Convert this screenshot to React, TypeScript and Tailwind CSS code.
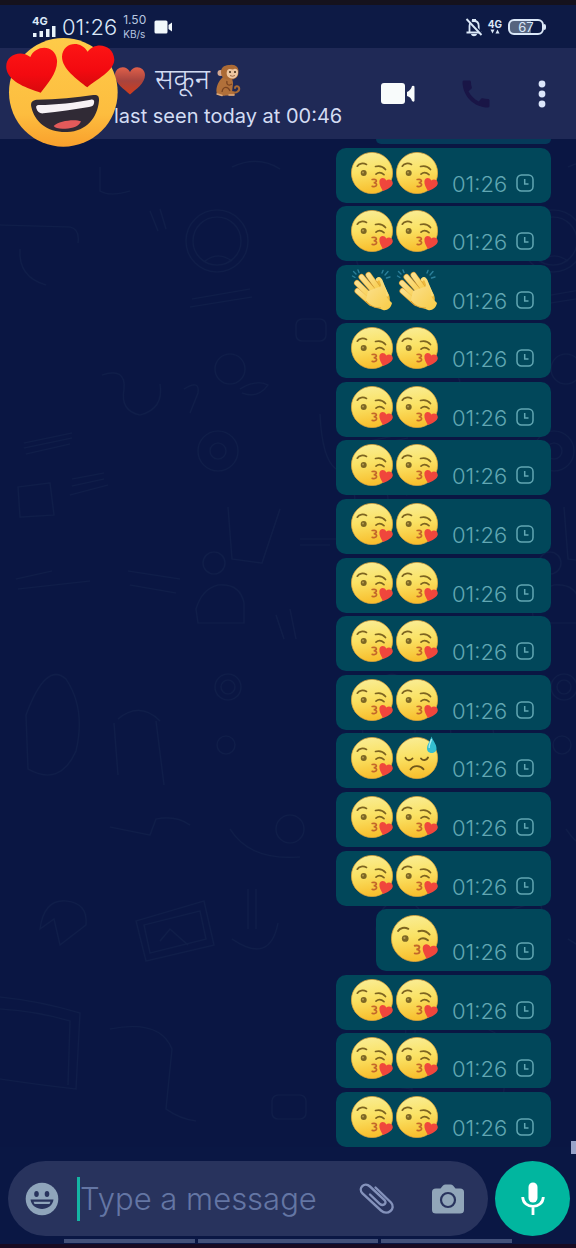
import React from "react";
import { MdCall } from "react-icons/md";

type EmojiKind = "kiss" | "clap" | "sweat";

function SharedGradients() {
  return (
    <svg className="absolute h-0 w-0" aria-hidden="true">
      <defs>
        <linearGradient id="face" x1="0" y1="0" x2="0.15" y2="1">
          <stop offset="0" stopColor="#f9ee9a" />
          <stop offset="0.5" stopColor="#fae265" />
          <stop offset="1" stopColor="#f8c02f" />
        </linearGradient>
        <linearGradient id="faceBig" x1="0" y1="0" x2="0" y2="1">
          <stop offset="0" stopColor="#fecb49" />
          <stop offset="0.7" stopColor="#fdbd3f" />
          <stop offset="1" stopColor="#f9a02c" />
        </linearGradient>
        <linearGradient id="redHeart" x1="0" y1="0" x2="0" y2="1">
          <stop offset="0" stopColor="#fd1515" />
          <stop offset="0.6" stopColor="#f30a10" />
          <stop offset="1" stopColor="#d8090d" />
        </linearGradient>
        <linearGradient id="dullHeart" x1="0" y1="0" x2="0" y2="1">
          <stop offset="0" stopColor="#e0604a" />
          <stop offset="0.5" stopColor="#a8443e" />
          <stop offset="1" stopColor="#d03c1c" />
        </linearGradient>
        <linearGradient id="skin" x1="0" y1="0" x2="1" y2="1">
          <stop offset="0" stopColor="#fbe08c" />
          <stop offset="1" stopColor="#f8cb45" />
        </linearGradient>
      </defs>
    </svg>
  );
}

function Kiss({ className }: { className: string }) {
  return (
    <svg viewBox="0 0 42 42" className={className} role="img" aria-label="Face blowing a kiss">
      <circle cx="21" cy="21" r="20.6" fill="url(#face)" stroke="#e9a83a" strokeWidth="0.7" />
      <g fill="none" stroke="#7d6420" strokeWidth="1.7" strokeLinecap="round">
        <path d="M6.3 14.2C8 11.4 12 10.6 15.5 12.4" />
        <path d="M24.5 14.5C28 13.5 32 14.5 34.5 17.5" />
        <path d="M25 22.2C27.5 20 30.5 20.5 33 22.6" />
      </g>
      <circle cx="12.7" cy="21" r="3" fill="#7d6724" />
      <circle cx="12" cy="20.5" r="1" fill="#b79c4e" />
      <path d="M21.2 27.5C26.5 26.5 26.5 30.3 22.7 30.7C27 31 26.5 35.5 21.2 34.3" fill="none" stroke="#c3672a" strokeWidth="1.7" strokeLinecap="round" />
      <path d="M32 39C30 36 28 32 28.4 29C29 25.5 33.5 25 35.2 28.5C37.5 26.5 42 27.5 41.8 31.5C41.3 35 36 37.5 32 39Z" fill="#f0463c" />
    </svg>
  );
}

function Sweat({ className }: { className: string }) {
  return (
    <svg viewBox="0 0 42 42" className={`overflow-visible ${className}`} role="img" aria-label="Downcast face with sweat">
      <circle cx="21" cy="21" r="20.6" fill="url(#face)" stroke="#e9a83a" strokeWidth="0.7" />
      <g fill="none" stroke="#705619" strokeWidth="1.9" strokeLinecap="round">
        <path d="M9.5 20.8C11 24 14.5 24 16.5 21.5" />
        <path d="M25 21.5C27 24 30.5 23.5 32 20.5" />
        <path d="M14.5 32.5C17 28 24.5 28 27.5 32.3" />
      </g>
      <path d="M35.5 -0.5C37 4 40.5 7 40.5 11.5C40.5 17.5 31 17.5 31 11.5C31 7 34.5 4 35.5 -0.5Z" fill="#35bfd0" />
      <path d="M35.5 2C34.5 6 32.8 8 33.2 11" fill="none" stroke="#a9edf0" strokeWidth="1.3" />
    </svg>
  );
}

function Clap({ className }: { className: string }) {
  return (
    <svg viewBox="0 0 42 42" className={className} role="img" aria-label="Clapping hands">
      <path d="M25 10C28 6 31 10 32 14L37 24C40 29 39 34 36 37L24 24Z" fill="#eebb3d" />
      <path d="M26 11C28 8 30 10 31 14L36 26" fill="none" stroke="#f8dc7b" strokeWidth="3" strokeLinecap="round" />
      <g fill="none" stroke="#d99d34" strokeWidth="6" strokeLinecap="round">
        <path d="M6.5 22L20 34" />
        <path d="M6 14L23 31" />
        <path d="M10.5 8L27 27" />
        <path d="M17.5 6L29 22" />
      </g>
      <g fill="none" stroke="url(#skin)" strokeWidth="4.8" strokeLinecap="round">
        <path d="M6.5 22L20 34" />
        <path d="M6 14L23 31" />
        <path d="M10.5 8L27 27" />
        <path d="M17.5 6L29 22" />
      </g>
      <path d="M17 22L28 18C30 20 29 13 33 17C36 21 34 27 37 30L41 34C40 39 36 42 32 41L27 39C22 39 17 34 15 31Z" fill="url(#skin)" />
      <path d="M15 32C20 38 25 39 30 39" fill="none" stroke="#e1a638" strokeWidth="1" />
      <g fill="none" stroke="#2b7f9a" strokeWidth="1.4" strokeLinecap="round">
        <path d="M1.5 7L4 8.5" />
        <path d="M2.5 2.5L5 5" />
        <path d="M7 1L8 3.5" />
        <path d="M31 4L32 1.5" />
        <path d="M34 6L37 2.5" />
        <path d="M35.5 9L39 8" />
      </g>
    </svg>
  );
}

function HeartEyes() {
  return (
    <svg viewBox="18 112 339 330" className="absolute -top-[11px] left-[6px] h-[110px] w-[113px]" role="img" aria-label="Smiling face with heart eyes">
      <circle cx="190" cy="278" r="163" fill="url(#faceBig)" />
      <path d="M94 322C91 306 98 302 110 300C172 299 229 294 280 286C294 285 298 290 297 303C292 355 260 394 202 397C142 399 104 367 94 322Z" fill="#302a35" />
      <path d="M109 326C107 319 110 317 116 316C170 315 226 309 272 300C281 299 284 302 282 311C280 319 276 321 267 322C222 329 176 337 130 341C119 342 112 337 109 326Z" fill="#f7f2f5" />
      <path d="M161 379C176 363 226 357 243 365C237 380 220 386 196 387C178 388 166 386 161 379Z" fill="#e35a5a" />
      <path d="M122 279C83 266 29 248 20 211C10 169 59 147 91 172C105 136 165 131 171 181C174 218 142 252 122 279Z" fill="url(#redHeart)" />
      <path d="M262 263C232 239 186 208 186 171C188 128 241 119 263 156C285 124 341 134 343 180C341 216 289 238 262 263Z" fill="url(#redHeart)" />
    </svg>
  );
}

function TitleHeart() {
  return (
    <svg viewBox="0 0 32 29" className="h-[29px] w-[32px]" role="img" aria-label="Red heart">
      <path d="M16 28.5C10 23 1 17.5 1 9C1 0.5 12.5 -2 16 6C19.5 -2 31 0.5 31 9C31 17.5 22 23 16 28.5Z" fill="url(#dullHeart)" />
    </svg>
  );
}

function Monkey() {
  return (
    <svg viewBox="0 0 28 33" className="h-[33px] w-[28px]" role="img" aria-label="Monkey">
      <path d="M18 28C23 30 26 26 25 23.5C24 21.5 21 22 21 24" fill="none" stroke="#a86a35" strokeWidth="2" strokeLinecap="round" />
      <path d="M9 13C4 17 2 24 2.5 28C3 32 8 32 12 31.5L20 31.5C22 30 20 28 18 28L19 20C19 15 17 13 13 12Z" fill="#b1703a" />
      <path d="M13 17C12 21 15 22 18 20M8 28C9 22 14 22 16 27" fill="none" stroke="#7a4421" strokeWidth="1.3" />
      <circle cx="6.5" cy="9" r="3" fill="#d6a992" />
      <path d="M7 8C7 2 12 1 16 1C21 0 25 3 24.5 8C24.5 14 20 16 15.5 15.5C10 15.5 7 13 7 8Z" fill="#ab6a35" />
      <path d="M13 7C14 4 17 5 19 5.5C21 4 24 5 24 8C24 12 22 14.5 18 14.5C13 14 12 10 13 7Z" fill="#edc6a0" />
      <circle cx="16" cy="8" r="1" fill="#3d2715" />
      <circle cx="21" cy="8" r="1" fill="#3d2715" />
      <path d="M16 11.5Q18.5 13 21 11.5" fill="none" stroke="#8c5535" strokeWidth="0.8" />
      <path d="M3 30L8 31.5M15 31L20 31" stroke="#dfac7f" strokeWidth="1.5" strokeLinecap="round" />
    </svg>
  );
}

function BellOff() {
  return (
    <svg viewBox="0 0 20 20" className="h-5 w-5" aria-hidden="true">
      <path d="M5.5 15V9C5.5 6 7.5 4 10 4C13 4 14.700 6 14.700 9V15M2.500 15.500H17.500" fill="none" stroke="#dbe8f8" strokeWidth="1.8" />
      <path d="M8 2H12V4H8ZM7 17H13C12.500 20 7.500 20 7 17Z" fill="#dbe8f8" />
      <path d="M4 1.500L18.500 17" stroke="#0d1a45" strokeWidth="1.8" />
      <path d="M2.500 2L17.500 18" stroke="#dbe8f8" strokeWidth="1.9" />
    </svg>
  );
}

function ClockIcon() {
  return (
    <svg viewBox="0 0 18 18" className="h-[18px] w-[18px]" role="img" aria-label="Pending">
      <rect x="1" y="1" width="16" height="16" rx="4.5" fill="none" stroke="#62a7b3" strokeWidth="1.5" />
      <path d="M8.7 5V10H12.5" fill="none" stroke="#62a7b3" strokeWidth="1.5" />
    </svg>
  );
}

function Doodles() {
  return (
    <svg className="absolute inset-0 h-full w-full" aria-hidden="true">
      <defs>
        <g id="doodleTile" fill="none" stroke="#15264f" strokeWidth="1.2" opacity="0.5">
          <circle cx="217" cy="102" r="31" />
          <circle cx="217" cy="102" r="24" />
          <path d="M205 122Q218 112 232 122M232 28Q258 16 280 30" />
          <path d="M0 86L70 88Q80 90 78 104M100 28V52Q110 58 130 52" />
          <path d="M20 110Q18 138 46 146M160 70L166 90M150 72L158 92" />
          <path d="M192 160L250 150M190 168L252 158" />
          <circle cx="230" cy="230" r="15" />
          <path d="M102 236Q126 228 124 250Q120 272 140 276Q164 270 160 245" />
          <path d="M24 304L72 294M24 309L72 299M26 315L70 305M72 340L104 334M72 347L104 340M70 356L108 346" />
          <circle cx="218" cy="312" r="20" />
          <circle cx="218" cy="312" r="8" />
          <path d="M320 275Q322 320 336 330M18 348L50 344L54 376L20 378Z" />
          <path d="M228 368L232 420L262 424L280 370M300 400H336M300 406H330" />
          <circle cx="214" cy="424" r="11" />
          <path d="M196 470Q202 450 218 446Q240 444 244 464V484H198ZM16 440L52 432M18 450L90 442" />
          <path d="M276 476L284 500M290 470L296 500M128 432L180 440M130 446L176 454" />
          <rect x="296" y="180" width="30" height="22" rx="6" />
          <path d="M184 250Q200 240 198 254L190 274M240 250Q256 240 268 246Q258 260 242 254" />
        </g>
        <g id="doodleTileLow" fill="none" stroke="#15264f" strokeWidth="1.2" opacity="0.5">
          <path d="M26 76Q46 22 66 40Q86 70 76 112Q60 148 28 130Z" />
          <path d="M114 84L118 136M156 82L164 146M118 80Q140 62 160 82" />
          <circle cx="228" cy="48" r="13" />
          <circle cx="228" cy="48" r="7" />
          <circle cx="290" cy="190" r="14" />
          <circle cx="226" cy="106" r="9" />
          <path d="M136 282L204 262L214 306L146 322ZM160 302L170 290L188 306M144 286L200 272L206 300L150 314Z" />
          <path d="M40 290Q44 260 66 262Q88 264 86 286L60 306L54 280Z" />
          <path d="M0 358Q40 362 80 374L76 450Q40 446 0 440M0 370Q36 372 70 382L68 446" />
          <path d="M110 390Q160 380 172 410L166 470Q180 480 196 482" />
          <path d="M248 250V290M256 250V290M232 300Q270 326 278 284" />
          <path d="M230 190Q250 222 300 218M110 188L150 196L156 180Q176 176 190 186" />
          <rect x="272" y="456" width="34" height="24" rx="6" />
        </g>
        <pattern id="doodles" width="336" height="1000" patternUnits="userSpaceOnUse">
          <use href="#doodleTile" />
          <use href="#doodleTileLow" y="500" />
        </pattern>
      </defs>
      <rect width="100%" height="100%" fill="url(#doodles)" />
    </svg>
  );
}

const emojiFor = { kiss: Kiss, clap: Clap, sweat: Sweat };

function Message({ emojis }: { emojis: EmojiKind[] }) {
  const single = emojis.length === 1;
  return (
    <li className={`flex items-end rounded-[10px] bg-[#01475a] pr-[17px] pl-[15px] ${single ? "h-[62px]" : "h-[55px]"}`}>
      <span className="flex gap-[3px] pb-[9px]">
        {emojis.map((kind, i) => {
          const Emoji = emojiFor[kind];
          return <Emoji key={i} className={single ? "h-[47px] w-[47px]" : "h-[42px] w-[42px]"} />;
        })}
      </span>
      <time className="ml-[14px] w-[54px] pb-1 text-[22px] leading-[30px] font-light whitespace-nowrap text-[#62a7b3]">01:26</time>
      <span className="ml-[10px] pb-[11px]">
        <ClockIcon />
      </span>
    </li>
  );
}

const kisses: EmojiKind[] = ["kiss", "kiss"];
const messages: EmojiKind[][] = [
  kisses,
  kisses,
  ["clap", "clap"],
  kisses,
  kisses,
  kisses,
  kisses,
  kisses,
  kisses,
  kisses,
  ["kiss", "sweat"],
  kisses,
  kisses,
  ["kiss"],
  kisses,
  kisses,
  kisses,
];

function StatusBar() {
  return (
    <div className="flex h-12 items-center justify-between border-t-[5px] border-[#15121d] bg-[#0d1a45] pr-[30px] pl-8 text-[#dbe8f8]">
      <div className="flex items-center">
        <div className="flex flex-col">
          <span className="text-[11px] leading-[10px] font-bold">4G</span>
          <svg viewBox="0 0 24 11" className="h-[11px] w-6" aria-hidden="true">
            <path d="M1 7h3.5v4H1zM7.5 5H11v6H7.5zM14 3h3.5v8H14zM20 0h3.5v11H20z" fill="#e8f3fb" />
          </svg>
        </div>
        <span className="ml-[6px] text-[22px] leading-7 font-light">01:26</span>
        <span className="ml-[6px] flex flex-col text-[#b8c7e0]">
          <span className="text-[12px] leading-[14px]">1.50</span>
          <span className="text-[10px] leading-[14px]">KB/s</span>
        </span>
        <svg viewBox="0 0 19 14" className="ml-2 h-[14px] w-[19px]" aria-hidden="true">
          <rect x="0.5" y="0.5" width="13" height="13" rx="1.5" fill="#f1f8fb" />
          <path d="M14.5 5L18 2.5V11.5L14.5 9Z" fill="#f1f8fb" />
        </svg>
      </div>
      <div className="flex items-center">
        <BellOff />
        <div className="ml-1 flex flex-col items-center">
          <span className="text-[10px] leading-[10px] font-bold">4G</span>
          <svg viewBox="0 0 10 5" className="h-[5px] w-[10px]" aria-hidden="true">
            <path d="M0.5 0.5H4.5L2.5 4.5ZM5.5 4.5H9.5L7.5 0.5Z" fill="#dbe8f8" />
          </svg>
        </div>
        <div className="ml-[6px] flex h-4 w-[36px] items-center justify-center rounded-[6px] border-2 border-[#dbe8f8] bg-linear-to-r from-[#56647f] from-67% to-[#0d1a45] to-67% text-[13px] leading-3">
          67
        </div>
        <div className="h-[6px] w-[2px] rounded-r bg-[#dbe8f8]" />
      </div>
    </div>
  );
}

function Header() {
  return (
    <header className="relative z-10 flex h-[91px] items-center bg-[#1f2956] pr-5 pl-[114px] text-[#d3dcf3]">
      <HeartEyes />
      <div className="flex flex-1 flex-col pt-[5px]">
        <h1 className="flex items-center text-[29px] leading-9 font-light">
          <TitleHeart />
          <span className="mr-1 ml-[9px] pt-[3px] font-['Noto_Sans_Devanagari','Noto_Sans',sans-serif]">सकून</span>
          <Monkey />
        </h1>
        <p className="text-[20px] leading-8 font-normal whitespace-nowrap">last seen today at 00:46</p>
      </div>
      <button type="button" aria-label="Video call" className="mr-[43px]">
        <svg viewBox="0 0 34 22" className="h-[22px] w-[34px]">
          <rect width="24" height="21" rx="3" fill="#f8fbfb" />
          <path d="M26 9Q30 7 31 3Q34 2 33.5 5V16Q34 20 31 18Q30 14 26 13Z" fill="#f8fbfb" />
        </svg>
      </button>
      <button type="button" aria-label="Voice call" className="mr-[34px]">
        <MdCall className="h-9 w-9 text-[#191546]" />
      </button>
      <button type="button" aria-label="More options" className="flex w-7 justify-center">
        <svg viewBox="0 0 8 28" className="h-7 w-2">
          <g fill="#dce6fb">
            <circle cx="4" cy="4" r="3.4" />
            <circle cx="4" cy="14" r="3.4" />
            <circle cx="4" cy="24" r="3.4" />
          </g>
        </svg>
      </button>
    </header>
  );
}

function Composer() {
  return (
    <footer className="relative bg-[#0a1744]">
      <div className="absolute -top-[6px] right-0 h-[13px] w-[5px] bg-[#98a3c9]" />
      <form className="flex items-center gap-[7px] pt-[14px] pr-[6px] pl-2" onSubmit={(e) => e.preventDefault()}>
        <div className="flex h-[75px] min-w-0 flex-1 items-center rounded-full bg-[#28335d] pr-[24px] pl-[17px]">
          <button type="button" aria-label="Emoji" className="shrink-0">
            <svg viewBox="0 0 34 34" className="h-[34px] w-[34px]">
              <circle cx="17" cy="17" r="16.3" fill="#8fa5bb" />
              <ellipse cx="11.5" cy="12" rx="2.3" ry="3" fill="#28335d" />
              <ellipse cx="22" cy="12" rx="2.3" ry="3" fill="#28335d" />
              <path d="M5.5 17.5H28.5C27 30 7 30 5.5 17.5Z" fill="#28335d" />
              <path d="M8.5 19.8H25.5L24.5 22H9.5Z" fill="#8fa5bb" />
            </svg>
          </button>
          <div className="ml-[18px] h-11 w-[3px] shrink-0 bg-[#14b5a4]" />
          <input
            type="text"
            aria-label="Message"
            placeholder="Type a message"
            className="w-full min-w-0 flex-1 bg-transparent text-[31px] leading-10 font-light text-[#d3dcf3] outline-none placeholder:text-[#6476a4]"
          />
          <button type="button" aria-label="Attach" className="mr-[37px] shrink-0">
            <svg viewBox="-1 -1 36 32" className="h-8 w-9">
              <path
                d="M15.5 3.5L31 18.5C36.5 24.5 27.5 32.5 21 26.5L2.5 9.5C-2.5 4 4.5 -2.5 10 2.5L24.5 16C27.5 19.5 23 22.5 20 20L10 10.5"
                fill="none"
                stroke="#8492bb"
                strokeWidth="2.4"
                strokeLinecap="round"
              />
            </svg>
          </button>
          <button type="button" aria-label="Camera" className="shrink-0">
            <svg viewBox="0 0 32 30" className="h-[30px] w-8">
              <path d="M4 4.5H8.5L11 1.5Q12 0.5 13.5 0.5H18.5Q20 0.5 21 1.5L23.5 4.5H28Q32 4.5 32 8V26Q32 29.5 28 29.5H4Q0 29.5 0 26V8Q0 4.5 4 4.5Z" fill="#91a6b9" />
              <circle cx="16" cy="16" r="7" fill="none" stroke="#28335d" strokeWidth="2.2" />
            </svg>
          </button>
        </div>
        <button type="button" aria-label="Record voice message" className="flex h-[75px] w-[75px] shrink-0 items-center justify-center rounded-full bg-[#01b69f]">
          <svg viewBox="0 0 24 34" className="h-[34px] w-6">
            <rect x="7.5" y="0.5" width="9" height="20" rx="4.5" fill="#fff" />
            <path d="M1.7 15C2 27.5 22 27.5 22.3 15M12 24.5V33" fill="none" stroke="#fff" strokeWidth="2.8" />
          </svg>
        </button>
      </form>
      <div className="flex gap-[3px] border-b-4 border-[#180b22] px-[64px] pt-[3px] pb-px">
        <div className="h-1 flex-[131] bg-[#43517a]" />
        <div className="h-1 flex-[181] bg-[#43517a]" />
        <div className="h-1 flex-[131] bg-[#43517a]" />
      </div>
    </footer>
  );
}

export default function App() {
  return (
    <div className="flex min-h-screen flex-col bg-[#0a1643] font-['Inter','Liberation_Sans',sans-serif]">
      <SharedGradients />
      <StatusBar />
      <Header />
      <main className="relative flex flex-1 flex-col">
        <Doodles />
        <ul className="relative flex flex-1 flex-col items-end justify-between gap-y-[3px] pr-[25px]">
          <li aria-hidden="true" className="h-[5px] w-[175px] rounded-b-[10px] bg-[#053a5a]" />
          {messages.map((emojis, i) => (
            <Message key={i} emojis={emojis} />
          ))}
        </ul>
      </main>
      <Composer />
    </div>
  );
}
